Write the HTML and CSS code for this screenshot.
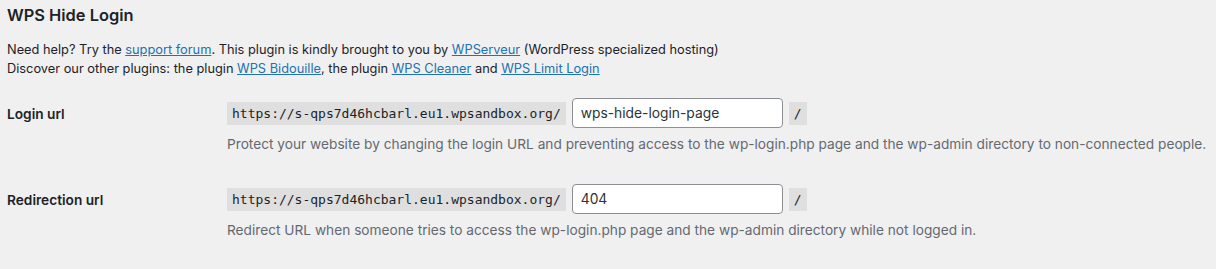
FILE: index.html
```html
<!DOCTYPE html>
<html lang="en">
<head>
  <meta charset="UTF-8" />
  <meta name="viewport" content="width=device-width, initial-scale=1.0"/>
  <title>WPS Hide Login</title>
  <link rel="stylesheet" href="styles.css">
</head>
<body>

  <div class="wrap">
    <h2 class="title">WPS Hide Login</h2>
    <p class="intro">
      Need help? Try the <a href="#">support forum</a>. This plugin is kindly brought to you by <a href="#">WPServeur</a> (WordPress specialized hosting)<br/>
      Discover our other plugins: the plugin <a href="#">WPS Bidouille</a>, the plugin <a href="#">WPS Cleaner</a> and <a href="#">WPS Limit Login</a>
    </p>

    <table class="form-table">
      <tr>
        <th>Login url</th>
        <td>
          <div class="url-field">
            <code>https://s-qps7d46hcbarl.eu1.wpsandbox.org/</code>
            <input type="text" class="regular-text" value="wps-hide-login-page" />
            <code>/</code>
          </div>
          <p class="description">Protect your website by changing the login URL and preventing access to the wp-login.php page and the wp-admin directory to non-connected people.</p>
        </td>
      </tr>
      <tr>
        <th>Redirection url</th>
        <td>
          <div class="url-field">
            <code>https://s-qps7d46hcbarl.eu1.wpsandbox.org/</code>
            <input type="text" class="regular-text" value="404" />
            <code>/</code>
          </div>
          <p class="description">Redirect URL when someone tries to access the wp-login.php page and the wp-admin directory while not logged in.</p>
        </td>
      </tr>
    </table>
  </div>

</body>
</html>
```

FILE: styles.css
```css
body {
  margin: 0;
  background-color: #f0f0f1;
  color: #1d2327;
  font-family: Inter, "Noto Sans", sans-serif;
  font-size: 13px;
  line-height: 1.4;
}

.wrap {
  padding: 0 7px;
}

.title {
  font-size: 16.4px;
  font-weight: 600;
  margin: 0;
  padding: 5px 0 0;
  line-height: 20px;
}

.intro {
  margin: 15px 0 0;
  font-size: 12.8px;
  line-height: 19px;
}

a {
  color: #2271b1;
}

.form-table {
  border-collapse: collapse;
  table-layout: fixed;
  margin-top: 5px;
  width: 100%;
}

.form-table th {
  width: 200px;
  padding: 23px 10px 20px 0;
  text-align: left;
  vertical-align: top;
  font-size: 13.7px;
  font-weight: 600;
  line-height: 1.3;
}

.form-table td {
  padding: 15px 10px;
  vertical-align: top;
}

.url-field {
  display: flex;
  align-items: center;
  gap: 5px;
}

code {
  background: rgba(0,0,0,0.07);
  font-family: "DejaVu Sans Mono", monospace;
  font-size: 13px;
  padding: 3px 5px 2px;
  line-height: 18px;
}

.regular-text {
  width: 211px;
  height: 30px;
  box-sizing: border-box;
  border: 1px solid #8c8f94;
  border-radius: 4px;
  padding: 0 8px;
  font-family: Inter, "Noto Sans", sans-serif;
  font-size: 13.8px;
  color: #2c3338;
  background: #fff;
  margin: 0 1px;
}

.description {
  color: #646970;
  margin: 5px 0 0;
  padding-top: 1px;
  font-size: 13.7px;
  line-height: 20px;
  white-space: nowrap;
}
```
